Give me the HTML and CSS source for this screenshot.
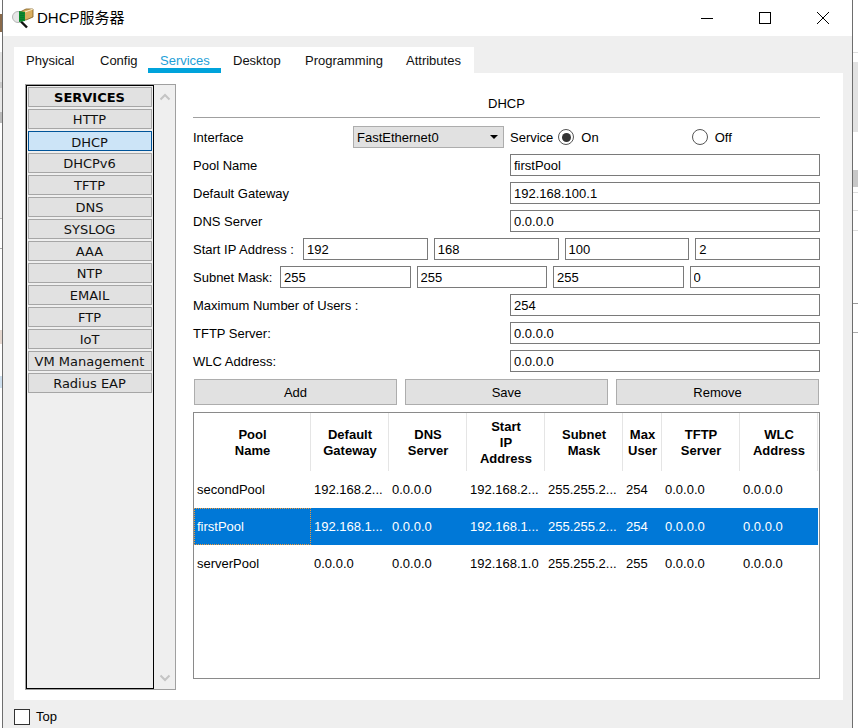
FILE: index.html
```html
<!DOCTYPE html>
<html lang="zh">
<head>
<meta charset="utf-8">
<title>DHCP服务器</title>
<link rel="stylesheet" href="styles.css">
</head>
<body>
<div class="desktop">
  <div class="strip strip-left"></div>
  <div class="window">
    <header class="titlebar">
      <svg class="app-icon" width="22" height="24" viewBox="0 0 22 24">
        <circle cx="6" cy="11" r="5.5" fill="#e6e6e6" stroke="#b5b5b5"/>
        <path d="M9 15.5l6 6" stroke="#111" stroke-width="2.4"/>
        <path d="M8 6l6-3 7 0v8l-7 3-6 0z" fill="#d9ad5f" stroke="#7b5a22" stroke-width=".8"/>
        <path d="M7 5l6 1v9l-6 1z" fill="#0d8a2c"/>
        <path d="M8.500 7.500h1m1 0h1m-3 2h1m1 0h1m-3 2h1m1 0h1m-3 2h1m1 0h1" stroke="#063" stroke-width="1"/>
        <path d="M13 6l8-3" stroke="#fbeecb" stroke-width="1"/>
      </svg>
      <span class="title-text">DHCP服务器</span>
      <div class="win-buttons">
        <span class="win-btn"><svg width="14" height="14" viewBox="0 0 14 14"><path d="M1 7.500h12" stroke="#000"/></svg></span>
        <span class="win-btn"><svg width="14" height="14" viewBox="0 0 14 14"><rect x="1.500" y="1.500" width="11" height="11" fill="none" stroke="#000"/></svg></span>
        <span class="win-btn"><svg width="14" height="14" viewBox="0 0 14 14"><path d="M1 1l12 12M13 1L1 13" stroke="#000"/></svg></span>
      </div>
    </header>
    <div class="client">
      <nav class="tabs">
        <span class="tab tab-physical">Physical</span>
        <span class="tab tab-config">Config</span>
        <span class="tab tab-services active">Services</span>
        <span class="tab tab-desktop">Desktop</span>
        <span class="tab tab-programming">Programming</span>
        <span class="tab tab-attributes">Attributes</span>
      </nav>
      <main class="panel">
        <aside class="sidebar">
          <div class="service-list">
            <div class="svc svc-head">SERVICES</div>
            <div class="svc">HTTP</div>
            <div class="svc svc-active">DHCP</div>
            <div class="svc">DHCPv6</div>
            <div class="svc">TFTP</div>
            <div class="svc">DNS</div>
            <div class="svc">SYSLOG</div>
            <div class="svc">AAA</div>
            <div class="svc">NTP</div>
            <div class="svc">EMAIL</div>
            <div class="svc">FTP</div>
            <div class="svc">IoT</div>
            <div class="svc">VM Management</div>
            <div class="svc">Radius EAP</div>
          </div>
          <div class="scrollbar">
            <svg width="12" height="8" viewBox="0 0 12 8"><path d="M1.500 6.500L6 2l4.500 4.500" fill="none" stroke="#c4c4c4" stroke-width="2"/></svg>
            <svg width="12" height="8" viewBox="0 0 12 8"><path d="M1.500 1.500L6 6l4.500-4.500" fill="none" stroke="#c4c4c4" stroke-width="2"/></svg>
          </div>
        </aside>
        <section class="form">
          <h1 class="form-title">DHCP</h1>
          <div class="rows">
            <div class="row row-interface">
              <span class="lbl-interface">Interface</span>
              <div class="select"><span>FastEthernet0</span><i class="caret"></i></div>
              <span class="lbl-service">Service</span>
              <span class="radio checked"></span>
              <span class="lbl-on">On</span>
              <span class="radio radio-off"></span>
              <span class="lbl-off">Off</span>
            </div>
            <div class="row row-wide"><span>Pool Name</span><input class="field" value="firstPool"></div>
            <div class="row row-wide"><span>Default Gateway</span><input class="field" value="192.168.100.1"></div>
            <div class="row row-wide"><span>DNS Server</span><input class="field" value="0.0.0.0"></div>
            <div class="row row-quad">
              <span class="lbl-start">Start IP Address&nbsp;:</span>
              <input class="field" value="192"><input class="field" value="168"><input class="field" value="100"><input class="field" value="2">
            </div>
            <div class="row row-quad">
              <span class="lbl-mask">Subnet Mask:</span>
              <input class="field" value="255"><input class="field" value="255"><input class="field" value="255"><input class="field" value="0">
            </div>
            <div class="row row-wide"><span>Maximum Number of Users :</span><input class="field" value="254"></div>
            <div class="row row-wide"><span>TFTP Server:</span><input class="field" value="0.0.0.0"></div>
            <div class="row row-wide"><span>WLC Address:</span><input class="field" value="0.0.0.0"></div>
          </div>
          <div class="actions">
            <button class="btn">Add</button>
            <button class="btn">Save</button>
            <button class="btn">Remove</button>
          </div>
          <div class="table-box">
            <table class="pools">
              <colgroup>
                <col class="c-name"><col class="c-std"><col class="c-std"><col class="c-std"><col class="c-std"><col class="c-max"><col class="c-std"><col class="c-std">
              </colgroup>
              <thead>
                <tr>
                  <th>Pool<br>Name</th><th>Default<br>Gateway</th><th>DNS<br>Server</th><th>Start<br>IP<br>Address</th><th>Subnet<br>Mask</th><th>Max<br>User</th><th>TFTP<br>Server</th><th>WLC<br>Address</th>
                </tr>
              </thead>
              <tbody>
                <tr><td>secondPool</td><td>192.168.2...</td><td>0.0.0.0</td><td>192.168.2...</td><td>255.255.2...</td><td>254</td><td>0.0.0.0</td><td>0.0.0.0</td></tr>
                <tr class="selected"><td class="focused">firstPool</td><td>192.168.1...</td><td>0.0.0.0</td><td>192.168.1...</td><td>255.255.2...</td><td>254</td><td>0.0.0.0</td><td>0.0.0.0</td></tr>
                <tr><td>serverPool</td><td>0.0.0.0</td><td>0.0.0.0</td><td>192.168.1.0</td><td>255.255.2...</td><td>255</td><td>0.0.0.0</td><td>0.0.0.0</td></tr>
              </tbody>
            </table>
          </div>
        </section>
      </main>
      <footer class="footer">
        <span class="checkbox"></span>
        <span>Top</span>
      </footer>
    </div>
  </div>
  <div class="strip strip-right"></div>
</div>
</body>
</html>
```
FILE: styles.css
```css
* { box-sizing: border-box; }
html, body { margin: 0; height: 100%; overflow: hidden; }
body {
  background: #fff;
  color: #000;
  font: 13px/16px "Liberation Sans", Arial, "Noto Sans CJK SC", sans-serif;
}
.desktop { display: flex; width: 858px; height: 728px; }
.strip { flex: none; height: 100%; }
.strip-left {
  width: 2px;
  background: linear-gradient(#fff 0 14px, #8a6a4a 14px 32px, #fff 32px 52px, #e4e4e4 52px 82px, #ccc 82px 88px, #e8e8e8 88px 112px, #bbb 112px 123px, #fff 123px 140px, #f2f2f2 140px 218px, #bbb 218px 219px, #fff 219px 248px, #aaa 248px 249px, #fff 249px 330px, #e6d8d0 330px 344px, #fff 344px 376px, #cfe0ef 376px 388px, #fff 388px);
}
.strip-right {
  width: 5px;
  background: linear-gradient(#fff 0 52px, #ddd 52px 53px, #fff 53px 62px, #e2e2e2 62px 132px, #fff 132px 170px, #c8c8c8 170px 187px, #fff 187px 192px, #ddd 192px 193px, #fff 193px 210px, #ddd 210px 211px, #fff 211px 230px, #ddd 230px 231px, #fff 231px 303px, #999 303px 304px, #fff 304px 332px, #aaa 332px 333px, #fff 333px);
}
.window {
  flex: none;
  width: 851px;
  height: 100%;
  border-left: 1px solid #6e6e6e;
  border-right: 1px solid #6e6e6e;
  display: flex;
  flex-direction: column;
}
.titlebar { flex: none; height: 36px; display: flex; align-items: center; padding-left: 9px; background: #fff; }
.app-icon { flex: none; margin-right: 3px; }
.title-text { font-size: 15px; line-height: 20px; }
.win-buttons { margin-left: auto; display: flex; }
.win-btn { width: 58px; height: 36px; display: flex; align-items: center; justify-content: center; }

.client { flex: 1; min-height: 0; background: #efefef; padding: 11px 9px 0 11px; display: flex; flex-direction: column; }
.tabs { flex: none; height: 26px; display: flex; align-self: flex-start; background: #fff; }
.tab { padding: 6px 0 0 12px; height: 26px; white-space: nowrap; color: #111; }
.tab-physical { width: 74px; }
.tab-config { width: 60px; }
.tab-services { width: 73px; }
.tab-desktop { width: 72px; }
.tab-programming { width: 101px; }
.tab-attributes { width: 80px; }
.tab.active { color: #1e9fd8; border-bottom: 5px solid #00a3db; }

.panel { flex: 1; min-height: 0; background: #fff; padding: 11px 22px 10px 11px; display: flex; gap: 17px; }
.sidebar { flex: none; width: 151px; display: flex; border: 1px solid #a0a0a0; }
.service-list {
  flex: none;
  width: 128px;
  border: 1px solid #000;
  background: #efefef;
  padding: 1px;
  display: flex;
  flex-direction: column;
  gap: 2px;
  font-family: "DejaVu Sans", Verdana, sans-serif;
}
.svc {
  height: 20px;
  border: 1px solid #a6a6a6;
  background: #e1e1e1;
  text-align: center;
  line-height: 20px;
  padding-right: 1px;
  white-space: nowrap;
  color: #111;
}
.svc-head { font-weight: 700; color: #000; }
.svc-active { background: #cce4f7; border-color: #005499; line-height: 22px; }
.scrollbar { flex: 1; background: #efefef; display: flex; flex-direction: column; justify-content: space-between; align-items: center; padding: 8px 0 7px; }

.form { flex: none; width: 627px; display: flex; flex-direction: column; }
.form-title { margin: 0; height: 34px; padding: 12px 0 0; border-bottom: 1px solid #a0a0a0; font: inherit; text-align: center; }
.rows { margin-top: 8px; display: flex; flex-direction: column; gap: 6px; }
.row { height: 22px; display: flex; align-items: center; white-space: nowrap; }
.row > span:not(.radio) { padding-top: 2px; }
.row-wide { display: grid; grid-template-columns: 317px 310px; }
.row-quad { gap: 6px; }
.row-quad .field { flex: 1 1 0; }
.lbl-start { flex: none; width: 104px; }
.lbl-mask { flex: none; width: 81px; }
.field {
  width: 100%;
  min-width: 0;
  height: 22px;
  border: 1px solid #7a7a7a;
  border-radius: 0;
  background: #fff;
  padding: 0 3px;
  margin: 0;
  font: inherit;
  color: #000;
  outline: none;
}
.lbl-interface { width: 160px; flex: none; }
.select {
  flex: none;
  width: 151px;
  height: 22px;
  border: 1px solid #adadad;
  background: #e1e1e1;
  display: flex;
  align-items: center;
  justify-content: space-between;
  padding: 2px 5px 0 3px;
}
.caret { width: 0; height: 0; border: 4px solid transparent; border-top: 4px solid #000; border-bottom: 0; margin-top: -2px; }
.lbl-service { margin-left: 6px; }
.radio { flex: none; width: 16px; height: 16px; border: 1.500px solid #555; border-radius: 50%; background: #fff; position: relative; }
.radio.checked { margin-left: 5px; }
.radio.checked::after { content: ""; position: absolute; inset: 2.500px; border-radius: 50%; background: #333; }
.lbl-on { margin-left: 7px; }
.radio-off { margin-left: 93px; }
.lbl-off { margin-left: 7px; }

.actions { margin: 7px 1px 0; display: flex; gap: 8px; }
.btn { flex: 1 1 0; height: 26px; border: 1px solid #adadad; background: #e1e1e1; font: inherit; color: #000; padding: 2px 0 0; }
.table-box { margin-top: 7px; height: 267px; border: 1px solid #8a8a8a; background: #fff; overflow: hidden; }
.pools { table-layout: fixed; width: 624px; border-collapse: separate; border-spacing: 0; }
.c-name { width: 117px; }
.c-std { width: 78px; }
.c-max { width: 39px; }
.pools th { height: 58px; padding: 2px 1px 0 2px; font-weight: 700; text-align: center; line-height: 16px; border-right: 1px solid #e5e5e5; }
.pools td { height: 37px; padding: 0 3px; white-space: nowrap; overflow: hidden; }
.selected td { background: #0078d7; color: #fff; }
.focused { outline: 1px dotted #f09a3a; outline-offset: -1px; }

.footer { flex: none; height: 28px; padding-top: 6px; display: flex; align-items: center; gap: 6px; }
.checkbox { width: 16px; height: 16px; border: 1px solid #333; background: #fff; }
```
